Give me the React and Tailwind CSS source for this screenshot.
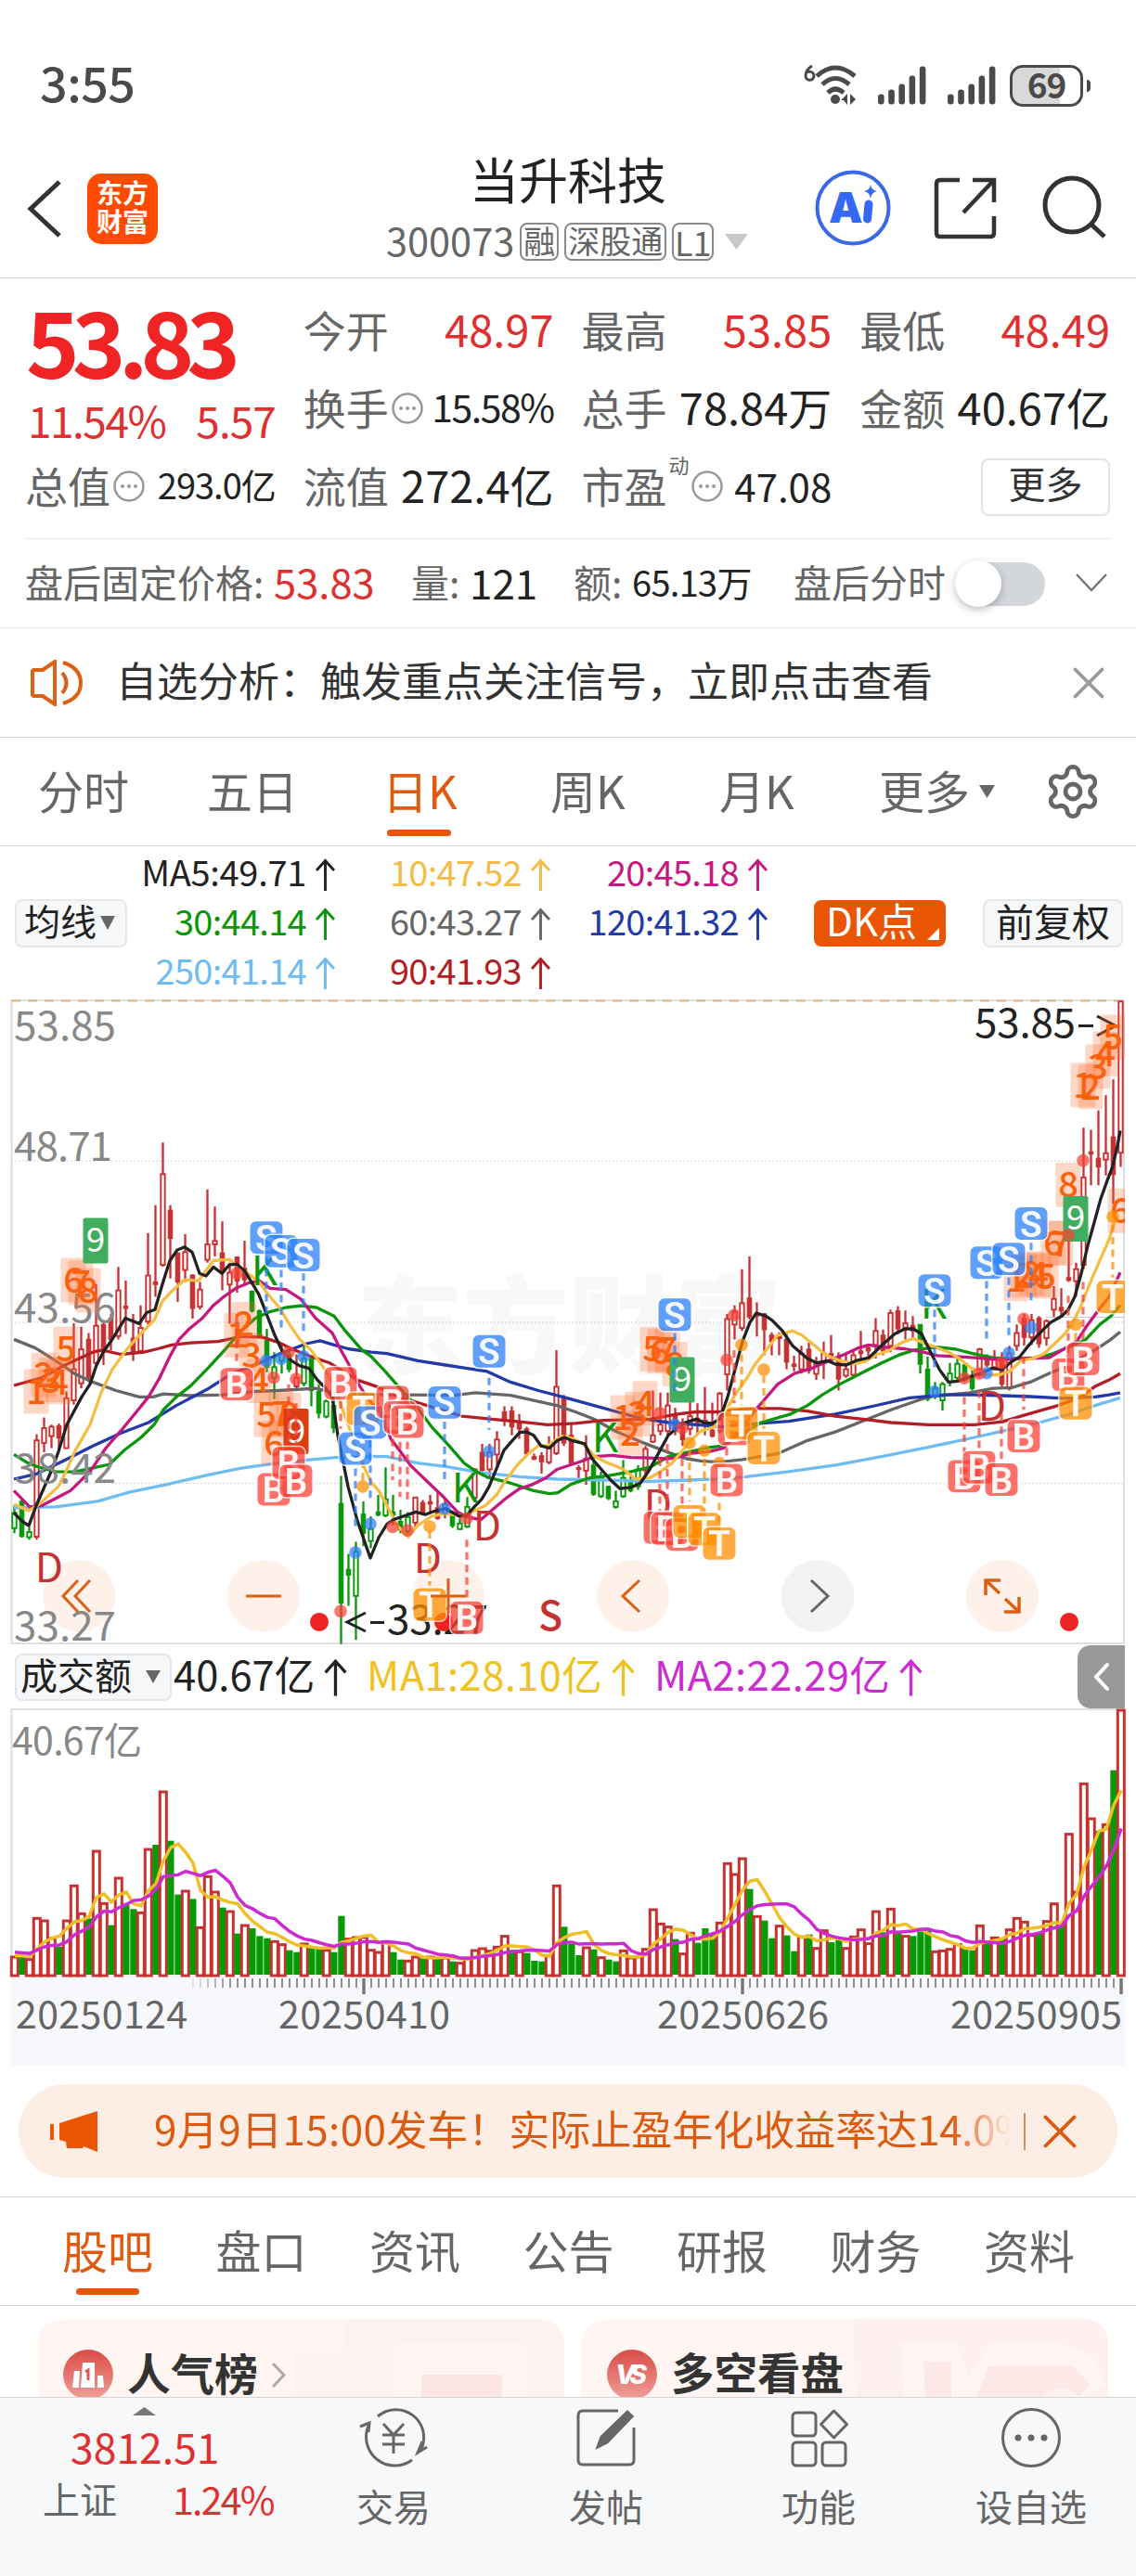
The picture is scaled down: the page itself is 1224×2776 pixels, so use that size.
import { X, Settings } from "lucide-react";

/* ================= DATA ================= */

const UP = "#c53232";
const DOWN = "#0a980a";

// [high, body top, body bottom, low, kind]
// kind: u = hollow red, r = solid red, g = solid green, h = hollow green
const CANDLES = [
  [1225,1242,1278,1290,"h"],[1208,1215,1297,1300,"g"],[1275,1287,1299,1305,"h"],[1058,1072,1298,1305,"u"],[1018,1043,1078,1100,"u"],
  [1035,1040,1062,1090,"u"],[1032,1038,1066,1095,"r"],[957,973,1090,1092,"u"],[797,905,978,988,"u"],[805,858,938,950,"u"],
  [820,835,925,935,"r"],[705,803,890,898,"u"],[790,800,865,895,"r"],[775,785,835,860,"r"],[665,720,827,835,"u"],
  [697,757,762,822,"r"],[775,832,865,885,"r"],[755,808,862,868,"u"],[585,685,793,800,"u"],[520,700,706,735,"r"],
  [373,447,660,665,"u"],[520,532,598,692,"r"],[632,632,700,747,"r"],[588,630,672,700,"u"],[682,684,762,786,"r"],
  [700,718,758,765,"u"],[483,612,648,655,"u"],[523,604,612,640,"u"],[558,632,678,720,"r"],[655,678,706,798,"u"],
  [640,642,698,725,"r"],[603,668,695,710,"r"],[720,722,768,772,"g"],[765,768,830,832,"g"],[810,838,900,912,"g"],
  [865,900,925,975,"h"],[850,868,885,915,"h"],[860,870,905,912,"g"],[870,925,945,950,"u"],[850,880,938,945,"h"],
  [875,880,955,992,"g"],[940,957,1008,1020,"g"],[975,980,1016,1020,"h"],[950,990,1043,1055,"g"],[1155,1220,1453,1550,"g"],
  [1338,1375,1388,1460,"g"],[1310,1333,1437,1540,"h"],[1215,1245,1290,1320,"g"],[1250,1280,1308,1325,"h"],[1200,1240,1247,1250,"g"],
  [1135,1210,1248,1252,"h"],[1200,1240,1247,1272,"g"],[1235,1262,1282,1290,"g"],[1240,1252,1285,1298,"h"],[1205,1206,1265,1280,"u"],
  [1212,1218,1242,1245,"r"],[1200,1216,1221,1242,"r"],[1190,1230,1255,1258,"r"],[1210,1222,1245,1255,"u"],[1238,1240,1272,1277,"g"],
  [1255,1267,1280,1282,"h"],[1205,1228,1274,1278,"h"],[1138,1140,1207,1210,"u"],[1080,1100,1142,1152,"r"],[1080,1100,1140,1160,"u"],
  [1050,1070,1105,1130,"u"],[992,1005,1025,1038,"r"],[992,1003,1040,1060,"r"],[1010,1030,1045,1068,"r"],[1040,1045,1103,1105,"r"],
  [1103,1110,1116,1118,"r"],[1100,1108,1122,1150,"r"],[1062,1090,1123,1128,"u"],[860,946,1102,1106,"u"],[965,970,1078,1085,"r"],
  [1035,1060,1125,1130,"r"],[1130,1136,1140,1160,"r"],[1060,1115,1143,1176,"u"],[1110,1130,1198,1202,"g"],[1145,1160,1203,1207,"h"],
  [1178,1180,1208,1212,"g"],[1190,1215,1228,1232,"h"],[1118,1160,1203,1207,"h"],[1150,1165,1190,1194,"g"],[1130,1140,1180,1188,"h"],
  [1085,1092,1142,1160,"u"],[955,1060,1075,1078,"u"],[960,1035,1050,1060,"u"],[960,990,1050,1062,"u"],[995,1010,1050,1060,"r"],
  [1020,1040,1070,1085,"r"],[980,1015,1045,1060,"u"],[985,1020,1030,1060,"r"],[947,1025,1035,1060,"u"],[983,1048,1062,1065,"r"],
  [958,962,1050,1055,"u"],[775,787,917,955,"u"],[755,770,800,835,"u"],[670,750,808,815,"u"],[640,738,782,788,"r"],
  [748,775,780,828,"r"],[773,775,812,872,"r"],[818,825,840,872,"r"],[818,828,832,872,"u"],[818,835,888,905,"r"],
  [873,893,898,910,"r"],[850,868,905,915,"u"],[843,858,908,915,"r"],[876,892,916,930,"u"],[840,868,890,928,"u"],
  [825,868,875,885,"r"],[865,878,928,955,"r"],[870,905,920,925,"u"],[860,872,918,922,"u"],[815,862,868,880,"r"],
  [845,855,862,875,"r"],[785,815,848,880,"u"],[812,825,862,872,"r"],[765,773,850,865,"u"],[757,768,810,822,"r"],
  [767,797,808,835,"u"],[780,802,815,835,"r"],[800,800,893,915,"g"],[875,905,975,980,"g"],[935,950,968,975,"h"],
  [935,940,978,1002,"h"],[890,915,935,945,"h"],[880,892,925,935,"h"],[890,895,930,935,"g"],[900,920,950,955,"g"],
  [855,858,905,925,"u"],[870,875,895,900,"r"],[860,880,900,905,"u"],[865,880,940,945,"r"],[850,868,950,955,"u"],
  [800,820,850,862,"u"],[775,785,830,850,"r"],[775,790,830,848,"u"],[780,785,845,855,"r"],[788,792,832,850,"u"],
  [710,740,765,782,"u"],[715,760,768,782,"r"],[600,690,696,700,"r"],[655,670,698,735,"u"],[338,455,660,670,"u"],
  [343,395,400,473,"r"],[297,410,430,473,"r"],[262,398,413,450,"u"],[225,360,448,517,"r"],[42,42,397,430,"u"],
];

// x, level pairs
const MA_LINES = [
  { color: "#6ebcf2", pts: "15,1230 60,1228 105,1215 140,1193 180,1175 220,1155 260,1137 300,1125 330,1118 362,1112 400,1109 417,1110 450,1125 480,1133 520,1148 560,1157 600,1163 650,1165 700,1168 745,1165 778,1162 804,1157 850,1145 900,1130 950,1110 1000,1088 1050,1065 1085,1048 1120,1030 1150,1012 1180,990 1207,972" },
  { color: "#666666", pts: "15,835 38,855 60,885 80,915 100,935 125,955 150,970 165,970 176,963 205,967 240,965 275,957 300,955 340,950 365,963 400,965 440,965 490,966 512,960 550,966 575,978 600,990 620,1005 640,1022 663,1050 690,1075 720,1100 740,1115 755,1120 775,1123 800,1117 838,1103 870,1072 900,1052 935,1022 960,1000 980,985 1000,970 1020,965 1045,960 1070,950 1090,948 1110,935 1130,915 1147,900 1180,860 1197,835 1207,817" },
  { color: "#2239a8", pts: "15,1163 40,1150 70,1118 100,1085 130,1055 160,1030 190,990 225,950 250,915 280,890 300,870 330,845 345,838 360,848 375,857 400,865 417,868 450,885 480,895 525,910 550,935 580,955 610,972 640,990 665,1005 690,1020 720,1030 760,1037 778,1040 819,1032 850,1027 900,1010 940,992 980,972 1020,965 1050,965 1080,967 1110,969 1145,973 1180,970 1195,965 1207,960" },
  { color: "#b31d24", pts: "15,943 45,925 70,895 100,865 110,860 130,870 155,865 170,857 185,848 205,843 235,840 260,828 283,830 300,842 315,858 335,875 355,890 370,910 385,930 405,945 430,970 460,990 498,1015 530,1022 560,1028 590,1035 620,1032 650,1025 700,1022 730,1010 750,1005 778,1005 808,997 840,997 870,1003 900,1015 930,1022 960,1030 1000,1035 1050,1035 1080,1028 1100,1015 1140,990 1165,970 1180,945 1195,930 1207,915" },
  { color: "#0a960a", pts: "15,1105 30,1125 42,1135 60,1145 80,1146 97,1138 118,1128 134,1095 152,1065 166,1035 176,1000 190,970 205,945 225,900 242,860 258,820 275,785 291,770 308,760 324,756 341,760 360,780 372,815 390,860 400,875 415,910 431,950 448,990 465,1040 482,1080 500,1125 513,1145 525,1158 550,1172 575,1190 592,1197 601,1195 615,1175 635,1160 655,1155 680,1145 700,1135 720,1110 740,1100 760,1090 778,1085 820,1030 852,1010 870,990 886,965 905,940 930,912 950,890 968,872 985,860 1010,853 1030,858 1048,868 1070,878 1090,880 1120,878 1135,868 1155,850 1170,835 1185,800 1197,780 1207,755" },
  { color: "#c5187f", pts: "15,1190 32,1228 45,1225 60,1208 76,1190 97,1145 114,1090 130,1050 147,1005 160,970 172,925 183,875 193,835 204,810 218,785 230,755 241,735 254,715 268,702 280,698 291,715 308,718 324,740 340,785 358,820 366,855 375,890 385,935 395,970 411,1010 421,1068 432,1100 442,1130 460,1168 478,1205 493,1240 504,1252 518,1258 532,1232 545,1208 560,1185 574,1175 588,1160 600,1140 625,1122 640,1110 660,1107 680,1112 700,1113 716,1115 728,1113 745,1102 765,1098 780,1090 800,1040 817,993 838,940 856,915 874,903 893,885 910,870 925,855 936,848 950,853 975,857 995,865 1010,873 1030,875 1050,878 1075,882 1100,880 1130,878 1160,840 1172,800 1185,762 1195,735 1207,678" },
  { color: "#f6bd45", pts: "15,1222 31,1237 42,1222 63,1180 70,1150 80,1100 97,1035 109,960 121,905 136,860 150,825 166,790 175,745 186,720 199,695 214,697 230,650 247,647 264,675 279,700 291,735 301,760 312,800 323,835 335,860 350,905 360,945 376,1040 386,1105 400,1170 408,1190 417,1225 428,1272 440,1298 450,1272 465,1250 480,1243 500,1250 510,1238 523,1225 535,1200 545,1165 558,1128 571,1100 581,1083 590,1085 605,1062 618,1068 630,1083 640,1108 652,1122 663,1132 672,1140 684,1162 700,1160 712,1145 724,1125 732,1105 743,1075 755,1050 770,1040 780,1010 792,965 805,925 813,895 825,862 838,825 854,815 864,825 878,850 890,872 905,885 920,892 932,887 945,870 957,862 972,842 984,833 994,842 1010,855 1025,868 1035,882 1048,905 1062,918 1077,918 1088,910 1100,885 1112,880 1124,870 1134,850 1146,825 1155,800 1164,760 1175,700 1186,645 1195,600 1203,545" },
  { color: "#222222", pts: "15,1242 24,1262 31,1272 39,1225 56,1140 63,1098 72,1035 88,970 97,940 104,895 112,862 120,838 135,785 150,798 158,772 167,765 175,705 183,650 191,625 199,618 207,630 215,680 222,686 230,665 239,680 247,660 255,658 264,675 279,730 288,780 296,825 304,862 314,885 323,897 333,903 342,930 351,950 358,970 364,1060 375,1180 385,1260 399,1348 408,1300 417,1268 425,1257 448,1240 458,1246 468,1238 480,1232 495,1250 503,1248 511,1228 519,1210 527,1180 535,1138 543,1095 551,1075 560,1053 567,1052 575,1060 583,1085 592,1090 600,1073 608,1065 616,1072 630,1080 638,1115 648,1140 658,1165 668,1185 680,1182 690,1172 700,1140 710,1100 720,1060 728,1045 738,1030 750,1022 758,1030 768,1032 776,1020 784,970 792,905 800,840 808,795 815,773 825,780 832,790 843,815 854,850 870,880 880,890 892,885 900,893 912,895 922,885 936,878 944,862 952,845 964,822 975,810 984,810 993,822 1002,862 1012,905 1022,935 1032,933 1046,922 1060,912 1068,903 1080,905 1090,887 1099,875 1108,850 1116,830 1124,812 1132,795 1144,780 1151,765 1158,735 1165,680 1172,615 1179,560 1186,505 1193,462 1199,428 1204,380 1207,345" },
];

const SIGNAL = { S: "#2a80fb", B: "#fb4136", T: "#ff8f00" };

// [kind, x, from, to]
const DASHES = [
  ["S",287,640,780],["S",303,672,810],["S",327,680,820],["S",383,1138,1275],["S",399,1072,1215],["S",479,1028,1165],["S",527,925,1047],
  ["S",727,820,960],["S",1007,765,905],["S",1063,698,838],["S",1087,690,830],["S",1111,608,748],
  ["B",255,780,895],["B",311,940,1090],["B",319,985,1130],["B",367,980,1045],["B",423,1068,1165],["B",431,1075,1205],["B",439,1075,1212],
  ["B",503,1305,1442],["B",711,1115,1240],["B",719,1080,1240],["B",735,1115,1250],["B",783,1090,1120],["B",791,860,985],["B",1039,970,1112],
  ["B",1055,955,1092],["B",1079,1010,1118],["B",1103,875,1000],["B",1151,732,870],["B",1167,700,837],
  ["T",391,1060,1170],["T",463,1285,1412],["T",743,1095,1215],["T",759,1115,1235],["T",775,1130,1270],["T",799,870,990],["T",823,920,1045],
  ["T",1159,820,945],["T",1199,565,690],
];

const DOTS = [
  ["S",287,885],["S",303,880],["S",327,875],["S",383,1335],["S",399,1268],["S",479,1232],["S",527,1098],["S",727,1035],["S",1007,957],
  ["S",1063,914],["S",1087,867],["S",1111,807],
  ["B",255,680],["B",295,925],["B",311,865],["B",319,928],["B",367,1473],["B",423,1275],["B",439,1283],["B",503,1255],["B",711,1008],["B",735,1043],
  ["B",783,883],["B",791,778],["B",1039,926],["B",1055,915],["B",1079,890],["B",1103,787],["B",1151,590],["B",1167,415],
  ["T",391,1180],["T",463,1274],["T",743,1078],["T",759,1096],["T",775,1125],["T",799,848],["T",823,906],["T",1159,800],["T",1199,547],
];

const BADGES = [
  ["S",287,596],["S",303,628],["S",327,637],["B",255,940],["B",295,1187],["B",311,1125],["B",319,1167],["B",367,938],
  ["T",391,998],["S",383,1091],["S",399,1030],["B",423,982],["B",431,1018],["B",439,1028],["S",479,983],["S",527,863],
  ["T",463,1457],["B",503,1488],["S",727,777],["B",711,1277],["B",719,1279],["B",735,1293],["T",743,1262],["T",759,1280],
  ["T",775,1314],["B",791,1045],["T",799,1032],["B",783,1165],["T",823,1090],["S",1007,720],["S",1063,655],["S",1087,646],
  ["S",1111,563],["B",1039,1156],["B",1055,1135],["B",1079,1164],["B",1103,1062],["B",1151,918],["B",1167,881],["T",1159,985],["T",1199,735],
];

const COUNTS = [
  [1,39,957],[2,47,918],[3,55,930],[4,63,935],[5,71,857],[6,79,696],[7,87,702],[8,95,720],
  [1,255,825],[2,263,799],[3,271,872],[4,279,932],[5,287,1012],[6,295,1078],[7,303,1010],[8,311,1012],
  [1,671,1018],[2,679,1055],[3,687,1010],[4,695,985],[5,703,858],[6,711,863],[7,719,860],[8,727,893],
  [1,1095,693],[2,1103,685],[3,1111,680],[4,1119,683],[5,1127,687],[6,1135,608],[7,1143,610],[8,1151,472],
  [1,1167,238],[2,1175,242],[3,1183,195],[4,1191,165],[5,1199,125],[6,1207,533],
];
const NINES = [[103,603,"#40ad5f"],[319,1051,"#db3d13"],[735,930,"#40ad5f"],[1159,552,"#40ad5f"]];
const LETTERS = [
  ["D",53,1370,UP],["D",461,1348,UP],["D",525,1272,UP],["D",709,1222,UP],["D",1069,990,UP],
  ["K",285,672,DOWN],["K",501,1183,DOWN],["K",652,1064,DOWN],["K",1006,752,DOWN],
];
const ROUND_BTNS = [85, 284, 483, 682, 881, 1080];

// negative = falling day
const VOLUME = [
  60,-57,52,185,177,120,-90,177,290,200,-182,402,233,-160,315,-225,-212,203,408,-420,594,-433,-259,273,-245,
  155,320,270,-217,207,-133,162,-150,-125,-118,110,100,-79,-73,102,-92,-85,82,-73,-190,118,123,123,82,75,
  110,-73,-49,47,60,-53,60,-55,57,-43,40,57,81,87,79,92,127,-80,77,-70,-45,-43,65,290,-155,
  -100,-63,90,-82,58,-49,-43,80,57,60,85,213,167,157,-115,70,137,-103,-150,-130,170,362,327,378,-277,
  191,-175,-118,160,-127,-76,125,-130,88,145,-105,-113,88,125,148,103,207,-137,215,-133,127,-125,-140,-143,77,
  80,85,100,-85,-79,161,-103,122,-115,148,185,173,130,-133,175,232,-160,457,270,620,507,-465,488,-661,858,
];

const QUOTES = [
  { label: "今开", value: "48.97", cls: "text-[47px] text-[#e02f2f]" },
  { label: "最高", value: "53.85", cls: "text-[47px] text-[#e02f2f]" },
  { label: "最低", value: "48.49", cls: "text-[47px] text-[#e02f2f]" },
];

const avg = (n, seed) =>
  VOLUME.map((_, i) => {
    let s = 0;
    for (let k = i - n + 1; k <= i; k++) s += k < 0 ? seed : Math.abs(VOLUME[k]);
    return s / n;
  });

const px = (i) => 16 + 8 * i;
const py = (v) => v * 0.4592 - 17;

/* ================= PAGE ================= */

export default function StockDetail() {
  return (
    <div className="w-[1224px] h-[2776px] overflow-hidden bg-white flex flex-col leading-none whitespace-nowrap text-[#222] font-['Noto_Sans_CJK_SC',sans-serif]">
      <StatusBar />
      <Header />
      <Quote />
      <AfterHours />
      <Notice />
      <PeriodTabs />
      <MaLegend />
      <PriceChart />
      <VolumeHead />
      <VolumeChart />
      <Banner />
      <InfoTabs />
      <Cards />
      <BottomBar />
    </div>
  );
}

/* ================= TOP ================= */

function Signal() {
  return (
    <svg width="52" height="42" viewBox="0 0 52 42" fill="#4a4a4a">
      {[30, 25, 19, 10, 0].map((y, i) => (
        <rect key={i} x={i * 11.2} y={y + 0.5} width="6.6" height={41 - y} rx="3" />
      ))}
    </svg>
  );
}

function StatusBar() {
  return (
    <div className="h-[150px] shrink-0 flex items-center pt-[34px] pl-[43px] pr-[49px] text-[#4a4a4a]">
      <span className="text-[52px] font-medium -mt-[8px] tracking-[-0.500px]">3:55</span>
      <div className="ml-auto flex items-center">
        <svg width="60" height="46" viewBox="0 0 60 46" fill="none" stroke="#4a4a4a" strokeWidth="5">
          <path d="M9 2Q2 6 2 13a4.500 4.500 0 1 0 2-4" strokeWidth="3" />
          <path d="M14 13Q34 -5 55 13M20 22Q34 9 49 22M26 31Q34 23 43 31" />
          <circle cx="34" cy="38" r="5" fill="#4a4a4a" stroke="none" />
          <path d="M47 32l-7 7h3l4 5zM50 32v12l6-6z" fill="#4a4a4a" stroke="none" />
        </svg>
        <div className="ml-[20px]"><Signal /></div>
        <div className="ml-[23px]"><Signal /></div>
        <div className="ml-[15px] w-[79px] h-[45px] rounded-[14px] border-[3.500px] border-[#4a4a4a] bg-linear-to-r from-[#d9d9d9] from-70% to-white to-70% flex items-center justify-center">
          <span className="text-[37px] font-bold -mt-[4px] tracking-[-1px]">69</span>
        </div>
        <div className="ml-[4px] w-[4px] h-[13px] rounded-r bg-[#4a4a4a]" />
      </div>
    </div>
  );
}

function Header() {
  return (
    <div className="h-[150px] shrink-0 flex items-center relative border-b border-[#d6d6d6]">
      <svg className="ml-[28px]" width="40" height="64" viewBox="0 0 40 64" fill="none" stroke="#333" strokeWidth="5">
        <path d="M36 3L5 32l31 29" />
      </svg>
      <div className="ml-[26px] w-[76px] h-[76px] rounded-[15px] bg-[#ff4a00] text-white font-bold text-[28px] leading-[31px] text-center pt-[5px]">
        东方<br />财富
      </div>
      <div className="absolute left-[416px] top-[16px] flex flex-col">
        <span className="text-[53px] ml-[90px]">当升科技</span>
        <div className="mt-[21px] flex items-center text-[#666]">
          <span className="text-[41.500px] -mt-[4px]">300073</span>
          <span className="ml-[6px] h-[41px] w-[42px] border-2 border-[#8a8a8a] rounded-[8px] text-[34px] flex justify-center">融</span>
          <span className="ml-[6px] h-[41px] w-[110px] border-2 border-[#8a8a8a] rounded-[8px] text-[34px] flex justify-center">深股通</span>
          <span className="ml-[6px] h-[41px] w-[45px] border-2 border-[#8a8a8a] rounded-[8px] text-[36px] flex justify-center">L1</span>
          <svg className="ml-[12px]" width="25" height="17" viewBox="0 0 25 17"><path d="M0 0h25L12.500 17z" fill="#c8c8c8" /></svg>
        </div>
      </div>
      <svg className="absolute left-[878px] top-[33px]" width="82" height="82" viewBox="0 0 82 82">
        <circle cx="41" cy="41" r="38.500" fill="none" stroke="#3b68ea" strokeWidth="4" />
        <text x="15" y="57" fontSize="46" fontWeight="900" fontFamily="Inter, sans-serif" fill="#3568f5">A</text>
        <path d="M58 37l-1.500 16" stroke="#3568f5" strokeWidth="9" strokeLinecap="round" />
        <path d="M60 16q1 6 7 7-6 1-7 8-1-7-7-8 6-1 7-7z" fill="#3568f5" />
      </svg>
      <svg className="absolute left-[1006px] top-[40px]" width="68" height="68" viewBox="0 0 68 68" fill="none" stroke="#333" strokeWidth="4.500">
        <path d="M28 4H7q-4 0-4 4v53q0 4 4 4h54q4 0 4-4V43" />
        <path d="M42 4h23v24M65 4L32 39" />
      </svg>
      <svg className="absolute left-[1122px] top-[38px]" width="72" height="72" viewBox="0 0 72 72" fill="none" stroke="#333" strokeWidth="5">
        <circle cx="33" cy="33" r="29" />
        <path d="M54 54l14 13" />
      </svg>
    </div>
  );
}

/* ================= QUOTE ================= */

function Info() {
  return (
    <svg width="34" height="34" viewBox="0 0 34 34" className="-mt-[2px]">
      <circle cx="17" cy="17" r="15.500" fill="none" stroke="#999" strokeWidth="2.500" />
      <circle cx="10" cy="17" r="2" fill="#999" /><circle cx="17" cy="17" r="2" fill="#999" /><circle cx="24" cy="17" r="2" fill="#999" />
    </svg>
  );
}

function Cell({ label, info, value, cls }) {
  return (
    <div className="flex items-center justify-between">
      <span className="flex items-center text-[46px] text-[#666]">
        <span className="-mt-[7px] -ml-px">{label}</span>
        {info && <span className="ml-[3px]"><Info /></span>}
      </span>
      <span className={`-mt-[7px] ${cls}`}>{value}</span>
    </div>
  );
}

function Quote() {
  return (
    <div className="h-[281px] shrink-0 pt-[15px] px-[28px]">
      <div className="h-[266px] border-b border-[#e6e6e6] grid grid-cols-4 gap-x-[31px] grid-rows-[84px_84px_84px]">
        <div className="text-[98px] font-bold text-[#f02424] tracking-[-8px] pt-px">53.83</div>
        {QUOTES.map((q) => <Cell key={q.label} {...q} />)}
        <div className="flex justify-between items-center text-[46px] text-[#e02f2f] tracking-[-1.500px] pt-[21px] pl-[2px]">
          <span>11.54%</span><span className="tracking-[-1px]">5.57</span>
        </div>
        <Cell label="换手" info value="15.58%" cls="text-[41px] tracking-[-1.500px]" />
        <Cell label="总手" value="78.84万" cls="text-[47px]" />
        <Cell label="金额" value="40.67亿" cls="text-[47px]" />
        <Cell label="总值" info value="293.0亿" cls="text-[38px] tracking-[-1px]" />
        <Cell label="流值" value="272.4亿" cls="text-[47px]" />
        <div className="flex items-center text-[46px] text-[#666]">
          <span className="-mt-[7px] -ml-px">市盈</span>
          <span className="text-[22px] -mt-[50px] ml-[2px] mr-[2px]">动</span>
          <Info />
          <span className="ml-auto text-[42px] text-[#222] -mt-[5px]">47.08</span>
        </div>
        <div className="flex items-center justify-end">
          <div className="w-[139px] h-[62px] border-2 border-[#e3e3e3] rounded-[8px] text-[40px] text-[#333] flex justify-center pt-[4px]">更多</div>
        </div>
      </div>
    </div>
  );
}

function AfterHours() {
  return (
    <div className="h-[97px] shrink-0 -mt-px border-b border-[#e6e6e6] flex items-center pl-[27px] text-[41px] text-[#666] *:-mt-[3px]">
      <span className="w-[268px]">盘后固定价格:</span>
      <span className="w-[148px] text-[43.500px] text-[#e02f2f]">53.83</span>
      <span className="w-[63px]">量:</span>
      <span className="w-[112px] text-[44px] text-[#222]">121</span>
      <span className="w-[63px]">额:</span>
      <span className="w-[174px] text-[38px] text-[#222] tracking-[-0.700px]">65.13万</span>
      <span className="w-[174px] text-[41px]">盘后分时</span>
      <div className="w-[97px] h-[47px] mt-[2px]! rounded-full bg-[#d3d6db] flex items-center">
        <div className="w-[50px] h-[50px] shrink-0 rounded-full bg-white shadow-[0_3px_8px_rgba(0,0,0,0.25)]" />
      </div>
      <svg className="ml-[33px] mt-0!" width="34" height="22" viewBox="0 0 34 22" fill="none" stroke="#777" strokeWidth="2.500"><path d="M1 2l16 17L33 2" /></svg>
    </div>
  );
}

function Notice() {
  return (
    <div className="h-[118px] shrink-0 border-b border-[#d2d2d2] flex items-center pl-[33px]">
      <svg width="58" height="50" viewBox="0 0 58 50" fill="none" stroke="#dd5f12" strokeWidth="4">
        <path d="M2 13q0-2 2-2h9L26 2v46L13 39H4q-2 0-2-2z" />
        <path d="M34 14q9 11 0 22M35 3q19 6 19 22T35 47" />
      </svg>
      <span className="ml-[34px] text-[44px] text-[#333] -mt-[8px]">自选分析：触发重点关注信号，立即点击查看</span>
      <X className="ml-[139px] text-[#999]" size={58} strokeWidth={1.6} />
    </div>
  );
}

/* ================= KLINE ================= */

function PeriodTabs() {
  return (
    <div className="h-[117px] shrink-0 border-b border-[#d2d6d9] pl-[41px] grid grid-cols-[182px_189px_181px_182px_172px_181px_auto] items-center text-[49px] text-[#666]">
      <span className="-mt-[6px]">分时</span>
      <span className="-mt-[6px]">五日</span>
      <div className="relative text-[#e05a10]">
        <span className="block -mt-[6px]">日K</span>
        <div className="absolute left-[5px] top-[62px] w-[69px] h-[7px] rounded-full bg-[#e95504]" />
      </div>
      <span className="-mt-[6px]">周K</span>
      <span className="-mt-[6px]">月K</span>
      <span className="flex items-center -mt-[6px]">更多<svg className="ml-[10px] mt-[6px]" width="17" height="14" viewBox="0 0 17 14"><path d="M0 0h17L8.500 14z" fill="#666" /></svg></span>
      <Settings size={64} strokeWidth={1.8} className="-ml-[4px]" />
    </div>
  );
}

function Up({ className = "ml-[10px]" }) {
  return (
    <svg className={`inline-block shrink-0 ${className}`} width="21" height="35" viewBox="0 0 21 35" fill="none" stroke="currentColor" strokeWidth="2.900">
      <path d="M10.500 35V3M1 13l9.500-10.500L20 13" />
    </svg>
  );
}

function Ma({ children, className }) {
  return (
    <div className={`flex items-center justify-end ${className}`}>
      <span className="-mt-[6px] tracking-[-0.700px]">{children}</span>
      <Up />
    </div>
  );
}

function MaLegend() {
  return (
    <div className="h-[165px] shrink-0 flex items-center">
      <div className="ml-[16px] w-[121px] h-[52px] border-2 border-[#e6e8ea] rounded-[8px] bg-[#f6f7f9] flex items-center pl-[8px] text-[39px]">
        <span className="-mt-[6px]">均线</span>
        <svg className="ml-[4px]" width="16" height="15" viewBox="0 0 16 15"><path d="M0 0h16L8 15z" fill="#666" /></svg>
      </div>
      <div className="grid grid-cols-[224px_232px_234px] grid-rows-[53px_53px_53px] mt-px text-[38px]">
        <Ma className="text-[#222]"><span className="tracking-[-0.300px]">MA5:49.71</span></Ma>
        <Ma className="text-[#f3bb47]">10:47.52</Ma>
        <Ma className="text-[#c5187f]">20:45.18</Ma>
        <Ma className="text-[#0a960a]">30:44.14</Ma>
        <Ma className="text-[#666]">60:43.27</Ma>
        <Ma className="text-[#2239a8]">120:41.32</Ma>
        <Ma className="text-[#6ebcf2]">250:41.14</Ma>
        <Ma className="text-[#b31d24]">90:41.93</Ma>
      </div>
      <div className="ml-[50px] w-[142px] h-[50px] rounded-[8px] bg-[#ea5504] text-white text-[42px] flex items-start pl-[13px] relative">
        DK点
        <svg className="absolute right-[7px] bottom-[7px]" width="13" height="13" viewBox="0 0 13 13"><path d="M13 0v13H0z" fill="#fff" /></svg>
      </div>
      <div className="ml-[40px] w-[151px] h-[52px] border-2 border-[#e6e8ea] rounded-[8px] bg-[#f6f7f9] text-[41px] flex justify-center">前复权</div>
    </div>
  );
}

function Candle({ d, i }) {
  const [hi, top, bot, lo, kind] = d;
  const c = kind === "g" || kind === "h" ? DOWN : UP;
  const hollow = kind === "u" || kind === "h";
  const x = px(i) - 0.5;
  return (
    <g stroke={c}>
      <path d={`M${x} ${py(hi)}V${py(top)}M${x} ${py(bot)}V${py(lo)}`} strokeWidth="2.300" />
      <rect x={x - 2.2} y={py(top)} width="4.400" height={Math.max(1.5, py(bot) - py(top))} fill={hollow ? "#fff" : c} strokeWidth={hollow ? 1.9 : 1.2} />
    </g>
  );
}

function PriceChart() {
  const line = (s) => s.split(" ").map((p) => {
    const [x, v] = p.split(",").map(Number);
    return `${x},${py(v).toFixed(1)}`;
  }).join(" ");

  return (
    <svg className="shrink-0" width="1224" height="696" viewBox="0 0 1224 696" fontFamily="'Noto Sans CJK SC', sans-serif">
      <defs><clipPath id="plot"><rect x="12" y="0" width="1200" height="695" /></clipPath></defs>
      <text x="384" y="394" fontSize="115" fontWeight="900" textLength="458" fill="#f8f8f8">东方财富</text>
      <path d="M12.500 1V694H1211V1" fill="none" stroke="#dedede" strokeWidth="2" />
      <path d="M12 1H1211" stroke="#e3e3e3" strokeWidth="2" />
      <path d="M12 1.500H1211" stroke="#e0b27c" strokeWidth="2" strokeDasharray="10 8" />
      {[416, 795, 1173].map((v) => <path key={v} d={`M12 ${py(v)}H1211`} stroke="#d4d4d4" strokeDasharray="2 2" />)}
      <path d="M1127 342.500H1211" stroke="#ccc" />
      {ROUND_BTNS.map((x) => <circle key={x} cx={x} cy="643" r="39" fill={x === 881 ? "#f3f3f3" : "#fef1ea"} />)}

      <g clipPath="url(#plot)">
        {CANDLES.map((d, i) => <Candle key={i} d={d} i={i} />)}
        {MA_LINES.map((m) => <polyline key={m.color} points={line(m.pts)} fill="none" stroke={m.color} strokeWidth="3.300" strokeLinejoin="round" />)}
      </g>

      <g fontSize="44" fill="#888">
        <text x="15" y="44" textLength="110">53.85</text>
        <text x="15" y="174" textLength="106">48.71</text>
        <text x="15" y="348" textLength="110">43.56</text>
        <text x="15" y="521" textLength="110">38.42</text>
        <text x="15" y="691" textLength="110">33.27</text>
      </g>

      <g clipPath="url(#plot)">
        <g fontSize="44" fill="#222">
          <text x="1050" y="41" textLength="109">53.85</text>
          <path d="M1162 28.500h16M1182 18l20 10.500-20 10.500" fill="none" stroke="#222" strokeWidth="3" />
          <path d="M394 661l-20 10 20 10M399 671.500h15" fill="none" stroke="#222" strokeWidth="3" />
          <text x="417" y="684" textLength="109">33.27</text>
        </g>

        {COUNTS.map(([n, x, v], i) => (
          <g key={i}>
            <rect x={x - 13.5} y={py(v) - 24} width="27" height="48" rx="2" fill="#ff6a2c" opacity="0.27" />
            <text x={x} y={py(v) + 13.5} fontSize="38" fontWeight="500" textAnchor="middle" fill="#f9600a">{n}</text>
          </g>
        ))}
        {NINES.map(([x, v, c]) => (
          <g key={x}>
            <rect x={x - 13.5} y={py(v) - 24.5} width="27" height="49" rx="2" fill={c} />
            <text x={x} y={py(v) + 12} fontSize="37" textAnchor="middle" fill="#fff">9</text>
          </g>
        ))}
        {LETTERS.map(([t, x, v, c], i) => (
          <text key={i} x={x} y={py(v) + 16} fontSize="44" textAnchor="middle" fill={c}>{t}</text>
        ))}
        <text x="593" y={py(1483) + 16} fontSize="43" fontWeight="500" textAnchor="middle" fill={UP}>S</text>

        {DASHES.map(([k, x, a, b], i) => (
          <path key={i} d={`M${x} ${py(a)}V${py(b)}`} stroke={SIGNAL[k]} strokeWidth="3.200" strokeDasharray="8 5.500" opacity="0.75" />
        ))}
        {DOTS.map(([k, x, v], i) => <circle key={i} cx={x} cy={py(v)} r="6.800" fill={SIGNAL[k]} opacity="0.72" />)}
        {[344, 478, 1152].map((x) => <circle key={x} cx={x} cy={py(1498)} r="10" fill="#ee2222" />)}
        {BADGES.map(([k, x, v], i) => (
          <g key={i}>
            <rect x={x - 18.2} y={py(v) - 18.2} width="36.400" height="36.400" rx="7" fill={SIGNAL[k]} stroke="#fff" strokeWidth="1.500" opacity="0.74" />
            <text x={x} y={py(v) + 14} fontSize="39" fontWeight="600" fontFamily="Roboto, sans-serif" textAnchor="middle" fill="#fff" opacity="0.93">{k}</text>
          </g>
        ))}
      </g>

      <g fill="none" stroke="#dd5f12" strokeWidth="3">
        <path d="M84 626L68 643l16 17M97 626L81 643l16 17" />
        <path d="M265 643h38" />
        <path d="M464 643h38M483 624v38" />
        <path d="M689 626l-18 17 18 17" />
        <path d="M874 626l18 17-18 17" stroke="#666" />
        <path d="M1062 642V626h16M1062 626l15 14M1098 644v16h-16M1098 660l-15-14" strokeWidth="3.500" />
      </g>
    </svg>
  );
}

function VolumeHead() {
  return (
    <div className="h-[68px] shrink-0 flex items-center pl-[16px] pr-[12px] text-[43.500px]">
      <div className="w-[169px] h-[51px] border-2 border-[#e3e6ea] rounded-[8px] bg-[#f6f7f9] flex items-center pl-[4px] text-[40px]">
        <span className="-mt-[6px]">成交额</span>
        <svg className="ml-[15px]" width="16" height="14" viewBox="0 0 16 14"><path d="M0 0h16L8 14z" fill="#666" /></svg>
      </div>
      <div className="ml-[2px] w-[208px] flex items-center"><span className="-mt-[7px]">40.67亿</span><Up className="ml-[12px] scale-115" /></div>
      <div className="w-[310px] flex items-center text-[#efc21f]"><span className="-mt-[7px] tracking-[0.400px]">MA1:28.10亿</span><Up className="ml-[12px] scale-115" /></div>
      <div className="flex items-center text-[#cd2bd2]"><span className="-mt-[7px] tracking-[0.400px]">MA2:22.29亿</span><Up className="ml-[12px] scale-115" /></div>
      <div className="ml-auto w-[51px] h-[68px] rounded-l-[14px] bg-[#999] flex items-center justify-center">
        <svg width="18" height="32" viewBox="0 0 18 32" fill="none" stroke="#fff" strokeWidth="4" strokeLinecap="round"><path d="M15 3L3 16l12 13" /></svg>
      </div>
    </div>
  );
}

function VolumeChart() {
  const base = 287;
  const trace = (arr) => arr.map((v, i) => `${px(i)},${(base - v / 3).toFixed(1)}`).join(" ");
  const ticks = Array.from({ length: 126 }, (_, i) => 208 + i * 8);

  return (
    <svg className="shrink-0" width="1224" height="386" viewBox="0 0 1224 386" fontFamily="'Noto Sans CJK SC', sans-serif">
      <rect x="12" y="289" width="1200" height="96" fill="#f7f8fb" />
      <path d="M12.500 288V1H1211V288" fill="none" stroke="#dedede" strokeWidth="2" />
      <path d="M12 288H1211" stroke="#dedede" />
      <text x="13" y="50" fontSize="41" fill="#888" textLength="140">40.67亿</text>
      {VOLUME.map((v, i) => {
        const h = Math.abs(v) / 3;
        return v < 0
          ? <rect key={i} x={px(i) - 3.7} y={base - h} width="7.200" height={h} fill="#079a05" />
          : <rect key={i} x={px(i) - 3.7} y={base - h + 1} width="7" height={h} fill="#fff" stroke={UP} strokeWidth="3" />;
      })}
      <polyline points={trace(avg(5, 62))} fill="none" stroke="#f0be25" strokeWidth="3.500" />
      <polyline points={trace(avg(10, 74))} fill="none" stroke="#cd2bd2" strokeWidth="3.500" />
      {ticks.map((x, i) => {
        const major = x === 392 || x === 800 || x === 1208;
        return <path key={x} d={`M${x} 291V${major ? 308 : 301}`} stroke="#777" strokeWidth={major ? 3.5 : 1.6} opacity={Math.min(1, 0.2 + i * 0.15)} />;
      })}
      <g fontSize="41" fill="#666">
        <text x="17" y="345" textLength="185">20250124</text>
        <text x="300" y="345" textLength="185">20250410</text>
        <text x="708" y="345" textLength="185">20250626</text>
        <text x="1024" y="345" textLength="185">20250905</text>
      </g>
    </svg>
  );
}

/* ================= BOTTOM ================= */

function Banner() {
  return (
    <div className="h-[141px] shrink-0 border-b border-[#d6d6d6] px-[20px] pt-[19px]">
      <div className="h-[101px] rounded-full bg-[#fdeee5] flex items-center pl-[33px] text-[#dc5b10]">
        <svg width="54" height="46" viewBox="0 0 54 46" fill="#ea5504">
          <path d="M1 15h4v17H1zM11 14L52 1v44l-15-6-1 2H19l-1-7-7-2z" />
        </svg>
        <div className="ml-[59px] w-[923px] h-[60px] overflow-hidden flex items-center text-[44px] mask-r-from-93% mask-r-to-100%">
          <span className="-mt-[8px]"><span className="tracking-[0.400px]">9月9日15:00</span>发车！实际止盈年化收益率达<span className="tracking-[-0.500px]">14.0%</span></span>
        </div>
        <div className="ml-[14px] w-[2px] h-[40px] bg-[#d98a5c]" />
        <X size={62} strokeWidth={1.5} className="ml-[6px] shrink-0" />
      </div>
    </div>
  );
}

function InfoTabs() {
  const tabs = ["股吧", "盘口", "资讯", "公告", "研报", "财务", "资料"];
  return (
    <div className="h-[117px] shrink-0 border-b border-[#d6d6d6] pl-[67px] pr-[66px] flex items-center justify-between text-[49px] text-[#666]">
      {tabs.map((t, i) => (
        <div key={t} className={i === 0 ? "relative text-[#e05a10]" : ""}>
          <span className="block -mt-[5px]">{t}</span>
          {i === 0 && <div className="absolute left-[15px] top-[62px] w-[68px] h-[7px] rounded-full bg-[#e95504]" />}
        </div>
      ))}
    </div>
  );
}

function Cards() {
  return (
    <div className="h-[98px] shrink-0 pt-[14px] pl-[41px] pr-[30px] grid grid-cols-2 gap-x-[19px] overflow-hidden">
      <div className="h-[120px] rounded-[26px] bg-[#fff6f3] relative overflow-hidden flex items-start">
        <svg className="absolute inset-0" width="567" height="120" viewBox="0 0 567 120">
          <path d="M277 120V36h52V0h238v120z" fill="#fef2f0" />
          <path d="M384 120V27h142v93z" fill="#fff6f4" />
          <rect x="413" y="60" width="87" height="60" fill="#fce6e4" />
        </svg>
        <div className="relative flex items-center mt-[33px] ml-[27px]">
          <svg width="54" height="54" viewBox="0 0 54 54">
            <defs><linearGradient id="coin" x2="0" y2="1"><stop stopColor="#d94c46" /><stop offset="1" stopColor="#f0a09a" /></linearGradient></defs>
            <circle cx="27" cy="27" r="27" fill="url(#coin)" />
            <path d="M12 23h6l-1 18h-7zM21 14h13v27H19zM37 28h6l1 13h-7z" fill="#fff" />
            <path d="M24 24l3-2v11" stroke="#dc5a55" strokeWidth="3" fill="none" />
          </svg>
          <span className="ml-[15px] text-[47px] font-bold text-[#333] -mt-[7px]">人气榜</span>
          <svg className="ml-[14px]" width="17" height="27" viewBox="0 0 17 27" fill="none" stroke="#aaa" strokeWidth="3"><path d="M2 1l12 12.500L2 26" /></svg>
        </div>
      </div>
      <div className="h-[120px] rounded-[26px] bg-[#fff6f3] relative overflow-hidden flex items-start">
        <svg className="absolute inset-0" width="567" height="120" viewBox="0 0 567 120">
          <path d="M292 0h275v120H296z" fill="#fdf0ee" />
          <path d="M343 24h60l14 40 24-38h70q50 10 52 44l-30 20q-30-34-52 0l-10 30H350z" fill="#fff5f3" />
          <path d="M368 46h30v74h-26zM412 120l26-70h90l20 20-12 14q-36-30-60 36z" fill="#fce9e7" />
        </svg>
        <div className="relative flex items-center mt-[33px] ml-[27px]">
          <svg width="54" height="54" viewBox="0 0 54 54">
            <circle cx="27" cy="27" r="27" fill="url(#coin)" />
            <text x="26" y="37" fontSize="28" fontWeight="800" fontStyle="italic" textAnchor="middle" textLength="34" fill="#fff" fontFamily="Inter, sans-serif">VS</text>
          </svg>
          <span className="ml-[15px] text-[46.500px] font-bold text-[#333] -mt-[7px]">多空看盘</span>
        </div>
      </div>
    </div>
  );
}

function NavItem({ label, children }) {
  return (
    <div className="flex flex-col items-center w-[160px]">
      <svg width="74" height="66" viewBox="0 0 74 66" fill="none" stroke="#666" strokeWidth="3">{children}</svg>
      <span className="mt-[20px] text-[40px]">{label}</span>
    </div>
  );
}

function BottomBar() {
  return (
    <div className="h-[193px] shrink-0 bg-[#f7f8fa] border-t border-[#d3d5d7] flex items-start text-[#666]">
      <div className="w-[344px] flex flex-col pt-[10px]">
        <svg className="ml-[143px]" width="25" height="9" viewBox="0 0 25 9"><path d="M0 9h25L12.500 0z" fill="#777" /></svg>
        <span className="ml-[76px] mt-[11px] text-[44.500px] text-[#e02f2f]">3812.51</span>
        <div className="flex mt-[13px] ml-[46px] text-[40px] items-center">
          <span className="w-[140px]">上证</span>
          <span className="text-[#e02f2f] text-[41px] tracking-[-1.700px]">1.24%</span>
        </div>
      </div>
      <div className="flex gap-x-[69px] pt-[10px]">
        <NavItem label="交易">
          <path d="M20 10A30 30 0 0 1 67 45M57 57A31 31 0 0 1 10 20M1 21l10-4-1 10M73 43l-10 6 5-12" />
          <path d="M26 18l11 12 11-12M37 30v20M25 30h24M25 40h24" />
        </NavItem>
        <NavItem label="发帖">
          <path d="M50 4H12q-5 0-5 5v48q0 5 5 5h50q5 0 5-5V22" />
          <path d="M28 43l4-11L60 5l5 5L38 38z" fill="#666" />
        </NavItem>
        <NavItem label="功能">
          <rect x="9" y="6" width="25" height="25" rx="4" />
          <rect x="9" y="38" width="25" height="25" rx="4" />
          <rect x="41" y="38" width="25" height="25" rx="4" />
          <path d="M53.500 4l14 14.500-14 14.500-14-14.500z" strokeLinejoin="round" />
        </NavItem>
        <NavItem label="设自选">
          <circle cx="37" cy="33" r="30.500" />
          <g fill="#666" stroke="none"><circle cx="23" cy="33" r="3.500" /><circle cx="37" cy="33" r="3.500" /><circle cx="51" cy="33" r="3.500" /></g>
        </NavItem>
      </div>
    </div>
  );
}
